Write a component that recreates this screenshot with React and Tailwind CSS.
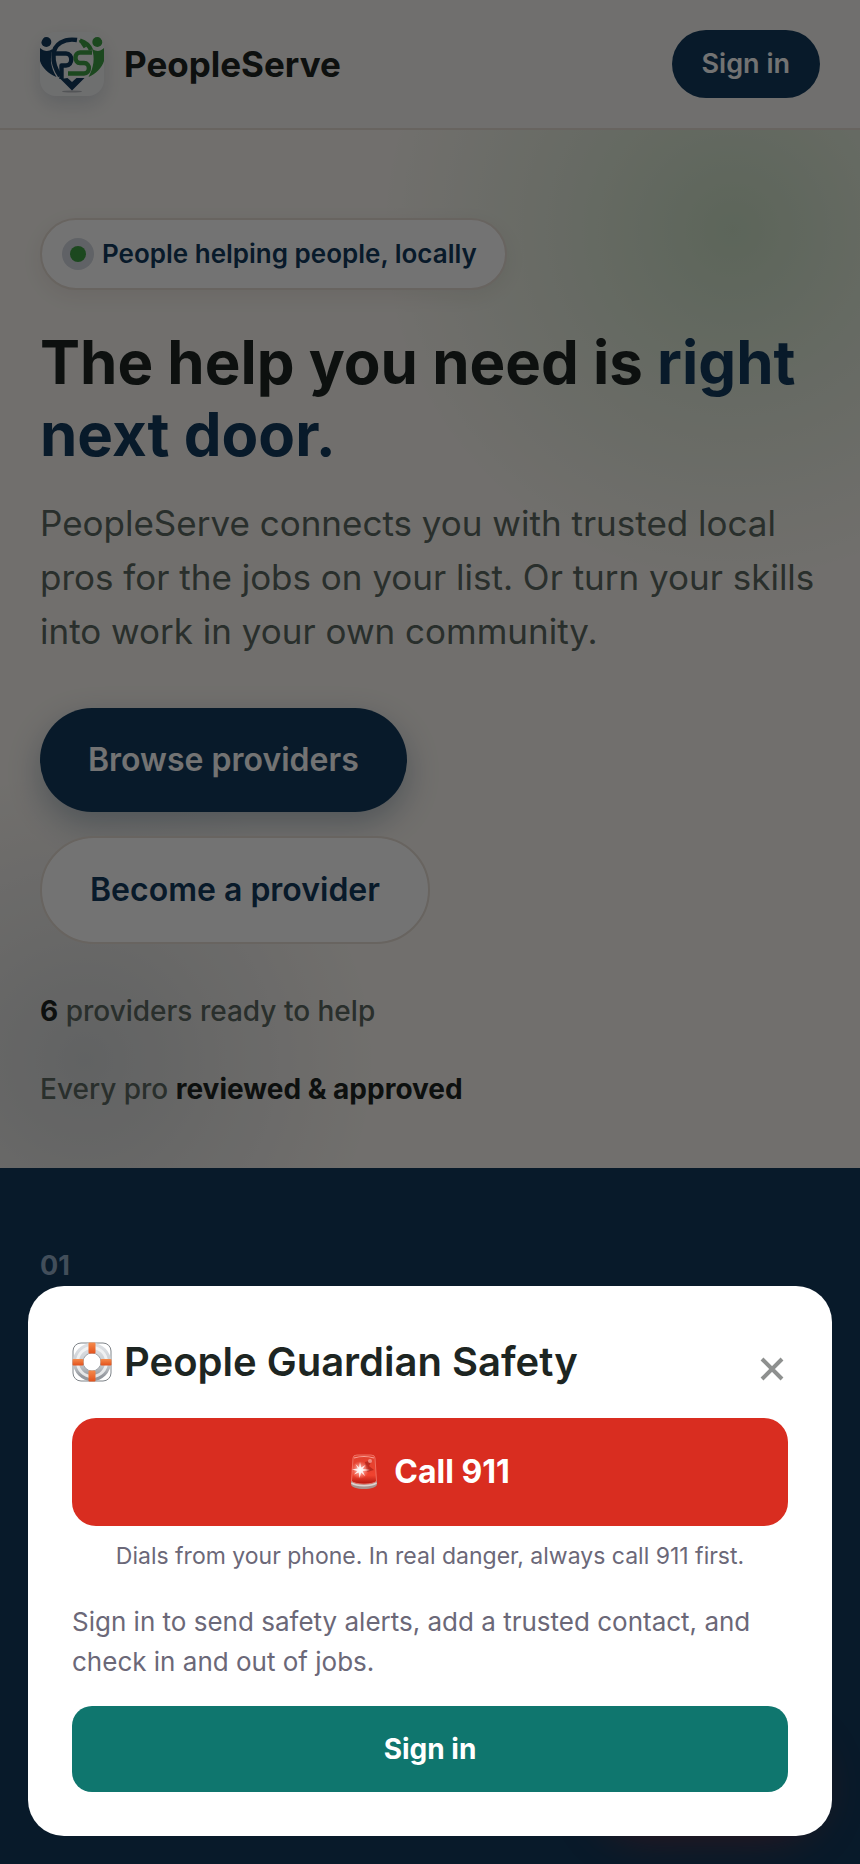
function Logo() {
  return (
    <svg viewBox="0 0 64 64" className="size-16 rounded-2xl bg-[#f4f5f7] shadow-[0_8px_20px_rgba(18,58,93,0.16)]" aria-hidden="true">
      <ellipse cx="32" cy="59.5" rx="10" ry="1" fill="#b9bcc1" />
      <g fill="#123a5d">
        <circle cx="6.3" cy="10" r="5" />
        <path d="M0 16C4 19.500 8 20 12.700 17C9.500 26 10.500 35 16.500 45C9 42 2 36 0 29Z" />
        <path d="M20.500 47L27.500 46L32 50L36.500 46H44.500L32 58.500Z" />
      </g>
      <g fill="#3f9f45">
        <circle cx="57.300" cy="10" r="5" />
        <path d="M64 16C60 19.500 57 20 52 17C55 26 54 35 48.500 45C55.500 42 62 36 64 29Z" />
      </g>
      <g fill="none" stroke="#123a5d" strokeWidth="4.400">
        <path d="M37 8C24 6 14 12 13.500 23C13 31 16 38 20 44" />
        <path d="M15 21.500H26C33 21.500 33 33.500 26 33.500H21.500V47" strokeLinejoin="round" />
      </g>
      <g fill="none" stroke="#3f9f45" strokeWidth="4.400">
        <path d="M40 8.500C45 10 49 13 51 18" />
        <path d="M52 20.500H40C34 20.500 34 31 40 31H44C50.500 31 50.500 41.500 44 41.500H28" />
        <path d="M40 8L45 15.500" strokeWidth="3" />
      </g>
    </svg>
  );
}

function Lifebuoy() {
  return (
    <svg viewBox="0 0 40 40" className="size-10 shrink-0" aria-hidden="true">
      <defs>
        <linearGradient id="ring" x1="0" y1="0" x2="0" y2="1">
          <stop offset="0" stopColor="#dcdfe3" />
          <stop offset="0.600" stopColor="#c6cace" />
          <stop offset="1" stopColor="#94989e" />
        </linearGradient>
        <linearGradient id="band" x1="0" y1="0" x2="0" y2="1">
          <stop offset="0" stopColor="#f58a4b" />
          <stop offset="1" stopColor="#e2511c" />
        </linearGradient>
      </defs>
      <rect x="1" y="1" width="38" height="38" rx="8" fill="none" stroke="#7f8489" strokeWidth="1" />
      <circle cx="20" cy="20" r="14" fill="none" stroke="url(#ring)" strokeWidth="10" />
      <circle cx="20" cy="20" r="14.500" fill="none" stroke="#f6f7f8" strokeWidth="3" opacity="0.800" />
      <circle cx="20" cy="20" r="9" fill="none" stroke="#a2a6ab" strokeWidth="1" />
      <g fill="url(#band)">
        <rect x="16.500" y="0.500" width="7" height="11" rx="1" />
        <rect x="16.500" y="28.500" width="7" height="11" rx="1" />
        <rect x="0.500" y="17" width="11" height="6.500" rx="1" />
        <rect x="28.500" y="17" width="11" height="6.500" rx="1" />
      </g>
    </svg>
  );
}

function Siren() {
  return (
    <svg viewBox="0 0 28 36" className="h-9 w-7 shrink-0" aria-hidden="true">
      <defs>
        <linearGradient id="dome" x1="0" y1="0" x2="0" y2="1">
          <stop offset="0" stopColor="#e0402f" />
          <stop offset="0.700" stopColor="#f0432f" />
          <stop offset="1" stopColor="#b3170f" />
        </linearGradient>
        <radialGradient id="flash">
          <stop offset="0" stopColor="#fff" stopOpacity="0.900" />
          <stop offset="1" stopColor="#fbb0a4" stopOpacity="0" />
        </radialGradient>
      </defs>
      <path d="M1 27H27V30C27 33.500 21 35 14 35S1 33.500 1 30Z" fill="#a8928d" />
      <path d="M1.500 29C7 32.500 21 32.500 26.500 29" fill="none" stroke="#ded3d0" strokeWidth="1.500" />
      <path d="M3 4Q3 1 7 1H21Q25 1 25 4L26.500 27C24 31 4 31 1.500 27Z" fill="url(#dome)" stroke="#f27b6d" strokeWidth="0.800" />
      <path d="M15 8L22 6L19 12L24 16L17 18Z" fill="#9e1c16" opacity="0.600" />
      <path d="M4 4Q14 1 24 4" fill="none" stroke="#f9a197" strokeWidth="1.200" />
      <circle cx="10" cy="16" r="9" fill="url(#flash)" />
      <path d="M10 8L11.200 13.500L15.500 11L12.700 15L20 16L12.700 17L15 22L11.200 18.500L9.500 24L8.800 18.500L4 20.500L7.300 17L2 15.500L7.800 14.500L5.500 10L9 13.500Z" fill="#fff" opacity="0.850" />
      <circle cx="20" cy="7" r="2" fill="#f9a197" opacity="0.800" />
    </svg>
  );
}

export default function App() {
  return (
    <div className="flex min-h-screen flex-col bg-[#faf6f1] font-['Inter','Liberation_Sans',sans-serif] text-[#1d2522]">
      <header className="flex items-center justify-between border-b-2 border-[#e6ddd4] bg-[#f9f7f4] px-10 py-[30px]">
        <a href="#home" className="flex items-center gap-5">
          <Logo />
          <span className="text-[35px] leading-[44px] font-bold">PeopleServe</span>
        </a>
        <a href="#signin" className="rounded-full bg-[#123a5d] px-[30px] py-[17px] text-[27px] leading-[34px] font-semibold text-white">
          Sign in
        </a>
      </header>

      <main className="flex grow flex-col">
        <section className="flex flex-col items-start bg-[radial-gradient(circle_at_733px_100px,rgba(63,159,69,0.24),rgba(63,159,69,0.13)_150px,transparent_350px),radial-gradient(circle_at_85px_930px,rgba(18,58,93,0.15),rgba(18,58,93,0.07)_150px,transparent_290px)] px-10 pt-[88px] pb-[60px]">
          <p className="flex items-center gap-2 rounded-full border-2 border-[#e6ddd4] bg-white py-4 pr-7 pl-5 text-[26px] leading-[36px] font-semibold text-[#123a5d] shadow-[0_6px_20px_rgba(60,50,30,0.08)]">
            <span className="flex size-8 items-center justify-center rounded-full bg-[#d5dae2]">
              <span className="size-4 rounded-full bg-[#3f9f45]" />
            </span>
            People helping people, locally
          </p>
          <h1 className="mt-9 text-[60px] leading-[72px] font-bold">
            The help you need is <span className="text-[#123a5d]">right next door.</span>
          </h1>
          <p className="mt-[26px] text-[35px] leading-[54px] text-[#5c6862]">
            PeopleServe connects you with trusted local pros for the jobs on your list. Or turn your skills into work in your own community.
          </p>
          <div className="mt-[50px] flex flex-col items-start gap-6">
            <a href="#browse" className="rounded-full bg-[#123a5d] px-12 py-8 text-[32px] leading-[40px] font-semibold text-white shadow-[0_12px_32px_rgba(18,58,93,0.3)]">
              Browse providers
            </a>
            <a href="#become" className="rounded-full border-2 border-[#e6ddd4] bg-white px-12 py-8 text-[32px] leading-[40px] font-semibold text-[#123a5d]">
              Become a provider
            </a>
          </div>
          <ul className="mt-12 flex flex-col gap-10 text-[28px] leading-[38px] font-medium text-[#5c6862]">
            <li>
              <strong className="font-bold text-[#1d2522]">6</strong> providers ready to help
            </li>
            <li>
              Every pro <strong className="font-bold text-[#1d2522]">reviewed &amp; approved</strong>
            </li>
          </ul>
        </section>
        <section className="grow bg-[#123a5d] px-10 py-20">
          <p className="text-[27px] leading-[36px] font-bold text-[#93aec8]">01</p>
        </section>
      </main>

      <button type="button" aria-label="Open safety panel" className="fixed right-10 bottom-10 h-24 w-56 rounded-full bg-[#d92d20] shadow-[0_12px_44px_rgba(217,45,32,0.45)]" />

      <div className="fixed inset-0 flex flex-col justify-end bg-black/55 p-7">
        <div role="dialog" aria-modal="true" aria-labelledby="safety-title" className="flex flex-col rounded-[36px] bg-white p-11">
          <div className="flex items-start justify-between">
            <h2 id="safety-title" className="flex items-center gap-3 text-[40px] leading-[64px] font-semibold">
              <Lifebuoy />
              People Guardian Safety
            </h2>
            <button type="button" aria-label="Close" className="pt-6">
              <svg viewBox="0 0 30 30" className="size-[30px]" fill="none" stroke="#8e908f" strokeWidth="4" aria-hidden="true">
                <path d="M4 5L24 25M24 5L4 25" />
              </svg>
            </button>
          </div>
          <a href="tel:911" className="mt-6 flex items-center justify-center gap-4 rounded-3xl bg-[#d92d20] px-6 py-8 text-[32px] leading-[44px] font-bold text-white">
            <Siren />
            Call 911
          </a>
          <p className="mt-3 text-center text-[23px] leading-[36px] text-[#6b6878]">
            Dials from your phone. In real danger, always call 911 first.
          </p>
          <p className="mt-7 text-[26px] leading-[40px] text-[#6b6878]">
            Sign in to send safety alerts, add a trusted contact, and check in and out of jobs.
          </p>
          <button type="button" className="mt-6 rounded-[20px] bg-[#0f766e] px-6 py-6 text-[28px] leading-[38px] font-bold text-white">
            Sign in
          </button>
        </div>
      </div>
    </div>
  );
}
